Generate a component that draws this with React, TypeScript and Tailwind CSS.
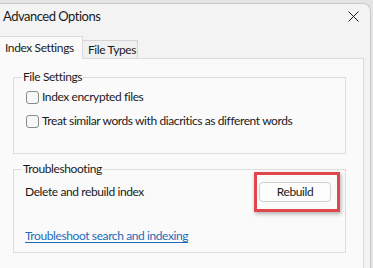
import React from "react";

export default function App() {
  return (
    <div
      className="w-[373px] h-[268px] overflow-hidden bg-[#e4e4e4] pt-[3px] text-[12px] tracking-[-0.4px] text-[#1a1a1a] whitespace-nowrap"
      style={{ fontFamily: 'Lato, "Noto Sans", sans-serif' }}
    >
      <div className="w-[371px] h-[265px] bg-[#f3f3f3] border-t border-r border-[#c9c9c9] rounded-tr-[8px] flex flex-col">
        {/* title bar */}
        <div className="h-[32px] shrink-0 flex items-center justify-between pl-[3px] pr-[11px]">
          <span className="text-[13px] tracking-[-0.5px] leading-none text-[#1b1b1b] -mt-[8px]">Advanced Options</span>
          <svg width="11" height="11" viewBox="0 0 11 11" className="-mt-[8px]">
            <path d="M0.5 0.5 L10.5 10.5 M10.5 0.5 L0.5 10.5" stroke="#1b1b1b" strokeWidth="1" />
          </svg>
        </div>
        {/* tabs */}
        <div className="flex items-end h-[23px] shrink-0 -mt-[1px]">
          <div className="h-[23px] w-[83px] bg-[#fafafa] border-r border-t border-[#dadada] pl-[5px] flex items-center relative z-10 -mb-px">
            <span className="leading-none">Index Settings</span>
          </div>
          <div className="h-[18px] w-[55px] bg-[#f0f0f0] border-r border-t border-[#d5d5d5] pl-[5px] flex items-center">
            <span className="leading-none">File Types</span>
          </div>
        </div>
        {/* panel */}
        <div className="w-[364px] flex-1 bg-[#fafafa] border-t border-r border-[#dadada] pt-[11px] pl-[13px]">
          <fieldset className="w-[333px] border border-[#dcdcdc] px-[12px] pb-[25px]">
            <legend className="ml-[-4px] px-[1px] leading-[14px]">File Settings</legend>
            <div className="flex items-center gap-[3px] mt-[6px]">
              <span className="w-[13px] h-[13px] rounded-[3px] border border-[#8a8a8a] bg-[#f7f7f7]" />
              <span className="leading-[14px]">Index encrypted files</span>
            </div>
            <div className="flex items-center gap-[3px] mt-[10px]">
              <span className="w-[13px] h-[13px] rounded-[3px] border border-[#8a8a8a] bg-[#f7f7f7]" />
              <span className="leading-[14px]">Treat similar words with diacritics as different words</span>
            </div>
          </fieldset>
          <fieldset className="w-[333px] border border-[#dcdcdc] mt-[8px] pl-[11px] pr-[5px] pb-[9px]">
            <legend className="ml-[-3px] px-[1px] leading-[14px]">Troubleshooting</legend>
            <div className="flex items-center justify-between -mt-[4px]">
              <span className="leading-[14px]">Delete and rebuild index</span>
              <div className="border-[3px] border-[#e0464d] pl-[2px] pr-[6px] py-[7px] shadow-[1px_2px_4px_rgba(0,0,0,0.3)]">
                <button className="w-[72px] h-[20px] rounded-[4px] border border-[#d0d0d0] bg-[#fdfdfd] leading-none tracking-[-0.4px] text-[#1a1a1a]">
                  Rebuild
                </button>
              </div>
            </div>
            <div className="mt-[17px] leading-[14px]">
              <span className="text-[#1f6bb8] underline underline-offset-2">
                Troubleshoot search and indexing
              </span>
            </div>
          </fieldset>
        </div>
      </div>
    </div>
  );
}
